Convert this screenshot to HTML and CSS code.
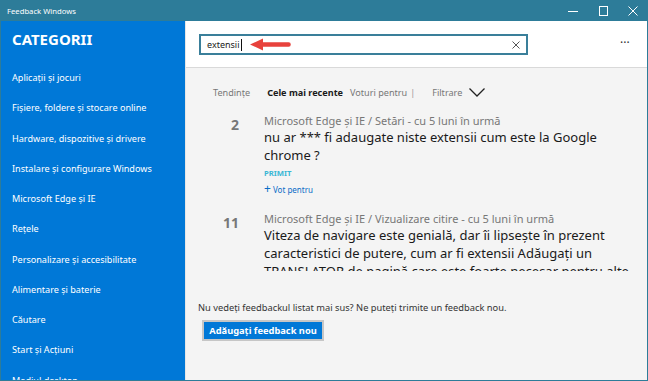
FILE: index.html
```html
<!DOCTYPE html>
<html>
<head>
  <meta charset="UTF-8" />
  <meta name="viewport" content="width=device-width, initial-scale=1.0" />
  <title>Feedback Windows</title>
  <link rel="stylesheet" href="styles.css">
</head>
<body>
  <div class="window">
    <div class="titlebar">
      <span class="title">Feedback Windows</span>
      <div class="controls">
        <svg width="10" height="10" viewBox="0 0 10 10"><path d="M0 5.5h10" stroke="#fff" stroke-width="1"/></svg>
        <svg width="10" height="10" viewBox="0 0 10 10"><rect x="1.5" y="0.5" width="8" height="9" fill="none" stroke="#fff" stroke-width="1"/></svg>
        <svg width="10" height="10" viewBox="0 0 10 10"><path d="M0.5 0.5l9 9M9.5 0.5l-9 9" stroke="#fff" stroke-width="1"/></svg>
      </div>
    </div>

    <div class="main">
      <!-- Categories -->
      <nav class="sidebar">
        <h1>CATEGORII</h1>
        <ul class="cat-list">
          <li>Aplicații și jocuri</li>
          <li>Fișiere, foldere și stocare online</li>
          <li>Hardware, dispozitive și drivere</li>
          <li>Instalare și configurare Windows</li>
          <li>Microsoft Edge și IE</li>
          <li>Rețele</li>
          <li>Personalizare și accesibilitate</li>
          <li>Alimentare și baterie</li>
          <li>Căutare</li>
          <li>Start și Acțiuni</li>
          <li>Mediul desktop</li>
        </ul>
      </nav>

      <div class="content">
        <!-- Search bar -->
        <div class="topbar">
          <div class="search">
            <span class="search-text">extensii</span><span class="caret"></span>
            <svg class="arrow" width="41" height="13" viewBox="0 0 41 13">
              <path d="M0 6.5L13 0.5V4.3H38.6a2.2 2.2 0 0 1 0 4.4H13V12.5Z" fill="#e8423c"/>
            </svg>
            <svg class="clear" width="8" height="8" viewBox="0 0 8 8"><path d="M0.5 0.5l7 7M7.5 0.5l-7 7" stroke="#555" stroke-width="1"/></svg>
          </div>
          <span class="more">···</span>
        </div>

        <div class="body">
          <div class="tabs">
            <span class="tab">Tendințe</span>
            <span class="tab active">Cele mai recente</span>
            <span class="tab">Voturi pentru</span>
            <span class="sep">|</span>
            <span class="tab filter">Filtrare</span>
            <svg class="chevron" width="16" height="9" viewBox="0 0 16 9"><path d="M0.5 0.5L8 8L15.5 0.5" fill="none" stroke="#222" stroke-width="1.3"/></svg>
          </div>

          <!-- Feedback list -->
          <div class="feed">
            <div class="item">
              <div class="votes">2</div>
              <div class="item-main">
                <div class="meta">Microsoft Edge și IE / Setări - cu 5 luni în urmă</div>
                <div class="item-title">nu ar *** fi adaugate niste extensii cum este la Google chrome ?</div>
                <div class="status">PRIMIT</div>
                <div class="vote-btn"><span class="plus">+</span> Vot pentru</div>
              </div>
            </div>
            <div class="item">
              <div class="votes">11</div>
              <div class="item-main">
                <div class="meta">Microsoft Edge și IE / Vizualizare citire - cu 5 luni în urmă</div>
                <div class="item-title">Viteza de navigare este genială, dar îi lipsește în prezent caracteristici de putere, cum ar fi extensii Adăugați un TRANSLATOR de pagină care este foarte necesar pentru alte limbi.</div>
              </div>
            </div>
          </div>

          <div class="footer">
            <p>Nu vedeți feedbackul listat mai sus? Ne puteți trimite un feedback nou.</p>
            <button class="btn-new">Adăugați feedback nou</button>
          </div>
        </div>
      </div>
    </div>
  </div>
</body>
</html>
```

FILE: styles.css
```css
* {
  margin: 0;
  padding: 0;
  box-sizing: border-box;
}

body {
  font-family: 'Noto Sans', 'Open Sans', sans-serif;
  background: #2d7c99;
  color: #1a1a1a;
}

.window {
  width: 648px;
  height: 381px;
  display: flex;
  flex-direction: column;
  border: 1px solid #2d7c99;
  border-top: none;
  overflow: hidden;
}

.titlebar {
  height: 21px;
  background: #2d7c99;
  display: flex;
  align-items: center;
  justify-content: space-between;
  color: white;
  padding-left: 6px;
}

.title {
  font-size: 7.7px;
}

.controls {
  display: flex;
  gap: 20px;
  padding-right: 9px;
}

.main {
  flex: 1;
  display: flex;
  min-height: 0;
}

.sidebar {
  width: 184px;
  background: #0078d7;
  color: white;
  padding: 8px 0 0 11px;
  overflow: hidden;
}

.sidebar h1 {
  font-size: 15px;
  font-weight: bold;
  line-height: 20px;
  margin-bottom: 14px;
}

.cat-list {
  list-style: none;
}

.cat-list li {
  font-size: 9.1px;
  line-height: 30.25px;
  white-space: nowrap;
}

.content {
  flex: 1;
  display: flex;
  flex-direction: column;
  background: #f4f4f4;
  border-left: 1px solid #e6e6e6;
}

.topbar {
  height: 47px;
  background: white;
  border-bottom: 1px solid #d9d9d9;
  display: flex;
  align-items: flex-start;
  padding: 13px 0 0 13px;
}

.search {
  position: relative;
  width: 329px;
  height: 21px;
  border: 2px solid #3a7f9a;
  display: flex;
  align-items: center;
  padding-left: 6px;
  font-size: 9px;
}

.caret {
  width: 1px;
  height: 12px;
  background: #111;
  margin-left: 1px;
}

.arrow {
  position: absolute;
  left: 49px;
  top: 2px;
}

.clear {
  position: absolute;
  right: 6px;
  top: 5px;
}

.more {
  margin-left: 92px;
  font-size: 12px;
  line-height: 18px;
  color: #333;
}

.body {
  flex: 1;
  display: flex;
  flex-direction: column;
}

.tabs {
  display: flex;
  align-items: center;
  height: 24px;
  margin-top: 12px;
  padding-left: 27px;
  font-size: 9.1px;
  color: #777;
}

.tab {
  margin-right: 17px;
}

.tab.active {
  color: #1a1a1a;
  font-weight: bold;
  margin-right: 7px;
}

.sep {
  margin: 0 17px 0 -14px;
  color: #999;
}

.tab.filter {
  margin-right: 7px;
}

.feed {
  height: 158px;
  margin-top: 9px;
  overflow: hidden;
}

.item {
  display: flex;
  margin-bottom: 13px;
}

.votes {
  flex-shrink: 0;
  width: 53px;
  text-align: right;
  font-size: 14px;
  font-weight: bold;
  color: #777;
  line-height: 20px;
  margin-top: 2px;
}

.item-main {
  margin-left: 25px;
  padding-right: 14px;
}

.meta {
  font-size: 11px;
  line-height: 16px;
  color: #777;
}

.item-title {
  font-size: 13px;
  line-height: 17.7px;
  color: #1a1a1a;
}

.status {
  font-size: 7.7px;
  font-weight: bold;
  color: #3ab7d4;
  line-height: 14px;
  margin-top: 2px;
}

.vote-btn {
  font-size: 8px;
  line-height: 16px;
  color: #0a6cc7;
  margin-top: 1px;
}

.plus {
  font-size: 12px;
}

.footer {
  padding: 30px 0 0 12px;
}

.footer p {
  font-size: 9.3px;
  color: #333;
  line-height: 14px;
}

.btn-new {
  margin: 5px 0 0 4px;
  width: 122px;
  height: 21px;
  background: #0078d7;
  border: 2px solid #c6c6c6;
  color: white;
  font-family: inherit;
  font-size: 9.3px;
  font-weight: bold;
  white-space: nowrap;
}
```
